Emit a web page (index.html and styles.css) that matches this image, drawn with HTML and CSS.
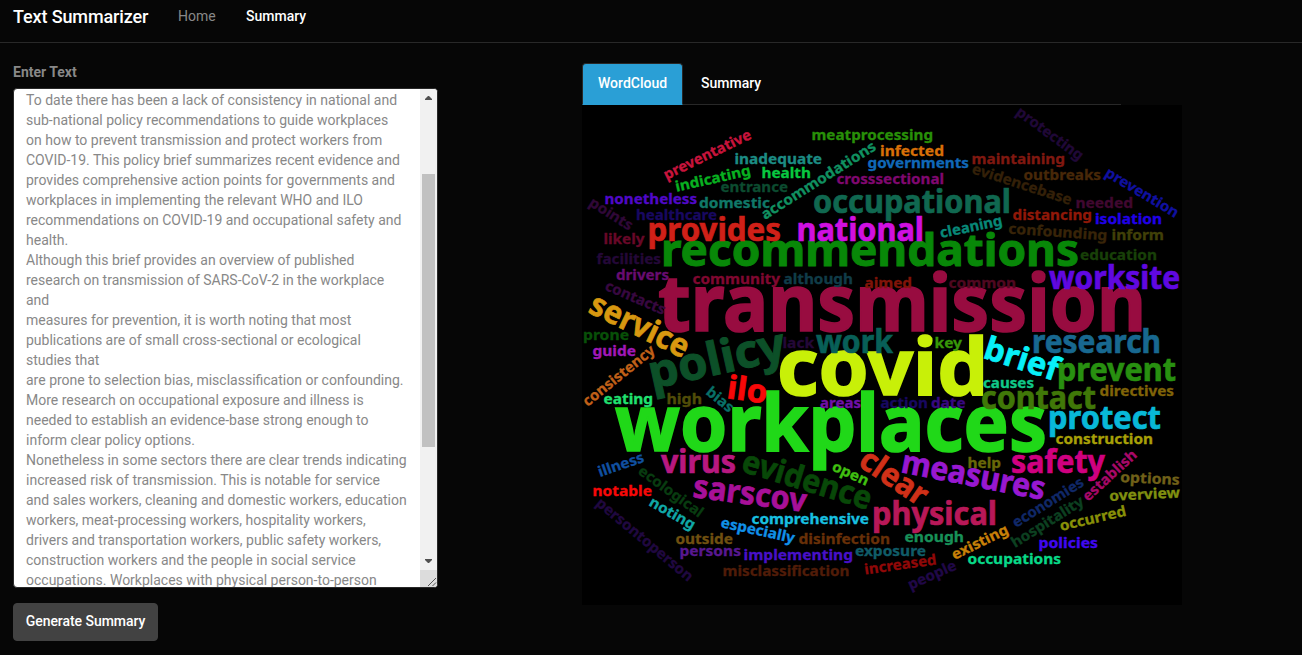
FILE: index.html
```html
<!DOCTYPE html>
<html lang="en">
<head>
<meta charset="utf-8">
<title>Text Summarizer</title>
<link rel="stylesheet" href="styles.css">
</head>
<body>
<nav class="navbar">
  <a class="brand">Text Summarizer</a>
  <a class="nav-link">Home</a>
  <a class="nav-link active">Summary</a>
</nav>
<main class="content">
  <section class="input-col">
    <label class="label">Enter Text</label>
    <div class="textarea">
      <div class="text">To date there has been a lack of consistency in national and<br>sub-national policy recommendations to guide workplaces<br>on how to prevent transmission and protect workers from<br>COVID-19. This policy brief summarizes recent evidence and<br>provides comprehensive action points for governments and<br>workplaces in implementing the relevant WHO and ILO<br>recommendations on COVID-19 and occupational safety and<br>health.<br>Although this brief provides an overview of published<br>research on transmission of SARS-CoV-2 in the workplace<br>and<br>measures for prevention, it is worth noting that most<br>publications are of small cross-sectional or ecological<br>studies that<br>are prone to selection bias, misclassification or confounding.<br>More research on occupational exposure and illness is<br>needed to establish an evidence-base strong enough to<br>inform clear policy options.<br>Nonetheless in some sectors there are clear trends indicating<br>increased risk of transmission. This is notable for service<br>and sales workers, cleaning and domestic workers, education<br>workers, meat-processing workers, hospitality workers,<br>drivers and transportation workers, public safety workers,<br>construction workers and the people in social service<br>occupations. Workplaces with physical person-to-person</div>
      <div class="scrollbar">
        <svg class="arrow" viewBox="0 0 17 17"><path d="M5 11h7v-1l-3-3h-1l-3 3z"/></svg>
        <div class="track"><div class="thumb"></div></div>
        <svg class="arrow" viewBox="0 0 17 17"><path d="M5 6h7v1l-3 3h-1l-3-3z"/></svg>
        <svg class="grip" viewBox="0 0 17 17"><path d="M8 16l8-8M12.500 16l3.500-3.500"/></svg>
      </div>
    </div>
    <button class="btn">Generate Summary</button>
  </section>
  <section class="output-col">
    <div class="tabs">
      <a class="tab selected">WordCloud</a>
      <a class="tab">Summary</a>
    </div>
    <svg class="cloud" id="cloud" viewBox="582 105 600 500"></svg>
  </section>
</main>
<script src="cloud.js"></script>
</body>
</html>
```
FILE: styles.css
```css
* { box-sizing: border-box; }
body {
  margin: 0;
  height: 655px;
  overflow: hidden;
  background: #060606;
  color: #888;
  font: 14px/20px Roboto, sans-serif;
}
.navbar {
  display: flex;
  height: 43px;
  padding: 6px 13px 0;
  border-bottom: 1px solid #282828;
}
.brand { width: 165px; color: #fff; font-size: 18px; line-height: 22px; font-weight: 500; letter-spacing: -0.12px; }
.nav-link { width: 68px; }
.nav-link.active { color: #fff; font-weight: 500; }
.content { display: flex; gap: 145px; padding: 19px 13px 0; }
.input-col { width: 424px; flex: none; }
.label { display: block; height: 26px; font-weight: 700; }
.textarea {
  display: flex;
  justify-content: space-between;
  width: 425px;
  height: 500px;
  overflow: hidden;
  border: 1px solid #282828;
  border-radius: 4px;
  background: #fff;
}
.text { padding: 1px 0 0 12px; white-space: nowrap; }
.scrollbar { display: flex; flex-direction: column; width: 17px; background: #f1f1f1; }
.arrow { width: 17px; height: 17px; flex: none; fill: #505050; }
.track { flex: 1; padding: 68px 2px 0; }
.thumb { height: 273px; background: #c1c1c1; }
.grip { width: 17px; height: 17px; flex: none; background: #dcdcdc; fill: none; stroke: #555; }
.btn {
  width: 145px;
  height: 38px;
  margin-top: 15px;
  padding: 0 0 2px;
  border: 1px solid #424242;
  border-radius: 4px;
  background: #424242;
  color: #fff;
  font: 500 14px/20px Roboto, sans-serif;
  letter-spacing: -0.05px;
}
.output-col { width: 600px; flex: none; padding-top: 1px; }
.tabs { display: flex; gap: 2px; width: 539px; height: 42px; border-bottom: 1px solid #282828; }
.tab { height: 42px; padding: 10px 16px; color: #fff; font-weight: 500; }
.tab.selected {
  width: 101px;
  padding: 9px 15px;
  border: 1px solid #282828;
  border-bottom-color: #2a9fd6;
  border-radius: 4px 4px 0 0;
  background: #2a9fd6;
}
.cloud {
  display: block;
  width: 600px;
  height: 500px;
  background: #000;
  font-family: "Noto Sans", "Open Sans", sans-serif;
  font-weight: 700;
}
.cloud text { stroke-width: 0.022em; }
```
FILE: cloud.js
```js
// word, baseline start x/y, baseline end x/y, font size, colour
const words = [
  ["transmission", 658, 331, 1146, 331, 78, "#980c40"],
  ["covid", 777, 395, 988, 395, 78, "#c8f008"],
  ["workplaces", 615, 451, 1047, 451, 78, "#20d818"],
  ["recommendations", 661, 265.5, 1079, 265.5, 45, "#088808"],
  ["policy", 652, 389, 788, 359, 46, "#0c5028"],
  ["occupational", 813, 212.5, 1011, 212.5, 32, "#106850"],
  ["national", 796.5, 241, 924, 241, 32, "#d010e0"],
  ["provides", 647.5, 241, 781, 241, 32, "#d02018"],
  ["worksite", 1049, 289, 1180, 289, 32, "#6008e0"],
  ["service", 587, 312, 683, 358.5, 32, "#d89810"],
  ["ilo", 726, 398, 766, 403.5, 32, "#f80808"],
  ["work", 816, 353, 893, 353, 32, "#086058"],
  ["brief", 982, 357.5, 1055, 381, 32, "#08f0f8"],
  ["research", 1032, 353, 1161, 353, 32, "#186890"],
  ["prevent", 1057, 381, 1176, 381, 32, "#289010"],
  ["contact", 981, 409, 1096, 409, 32, "#407808"],
  ["protect", 1048, 429, 1161, 429, 32, "#08b8d8"],
  ["virus", 661, 473, 736, 473, 32, "#b81880"],
  ["evidence", 740, 471, 868, 510, 32, "#084808"],
  ["sarscov", 692, 497, 805, 512, 32, "#a81098"],
  ["clear", 857, 465, 919, 507, 32, "#d03018"],
  ["measures", 900, 472, 1043, 500, 32, "#9818d0"],
  ["safety", 1011, 473, 1105, 473, 32, "#d00080"],
  ["physical", 872, 525, 997, 525, 32, "#b81858"],
  ["preventative", 666.5, 180, 752.5, 138, 14.5, "#c8143c"],
  ["inadequate", 734.5, 164, 822, 164, 14.5, "#1c8c84"],
  ["indicating", 676.5, 191.7, 751.5, 175, 14.5, "#08b020"],
  ["health", 761.5, 177.7, 811, 177.7, 14.5, "#08c840"],
  ["entrance", 720.5, 192, 788, 192, 14.5, "#0c4c30"],
  ["nonetheless", 604.5, 203.7, 697, 203.7, 14.5, "#5008c8"],
  ["domestic", 699, 207.7, 770, 207.7, 14.5, "#107868"],
  ["healthcare", 636, 219.7, 717, 219.7, 14.5, "#180860"],
  ["points", 588, 205, 629, 231, 14.5, "#300838"],
  ["accommodations", 765, 220, 877, 149, 14.5, "#109060"],
  ["meatprocessing", 811.5, 140, 933, 140, 14.5, "#289008"],
  ["infected", 880, 155.7, 944, 155.7, 14.5, "#d87008"],
  ["governments", 867.5, 167.7, 969, 167.7, 14.5, "#1068b8"],
  ["crosssectional", 836.5, 183.7, 944, 183.7, 14.5, "#800870"],
  ["cleaning", 941, 238, 1003, 225, 14.5, "#088878"],
  ["maintaining", 971.5, 164, 1065, 164, 14.5, "#801810"],
  ["evidencebase", 971, 173, 1070, 205, 14.5, "#342008"],
  ["outbreaks", 1023.5, 180, 1101, 180, 14.5, "#482808"],
  ["protecting", 1015, 114, 1079, 161, 14.5, "#200838"],
  ["prevention", 1104, 175.5, 1175, 218, 14.5, "#1010a0"],
  ["needed", 1075.5, 208, 1133, 208, 14.5, "#400830"],
  ["distancing", 1012.5, 220, 1092, 220, 14.5, "#901808"],
  ["isolation", 1095, 224, 1162, 224, 14.5, "#2000e8"],
  ["confounding", 1008, 233.5, 1107, 240.5, 14.5, "#382408"],
  ["inform", 1111.5, 240, 1164, 240, 14.5, "#404008"],
  ["education", 1080, 260, 1157, 260, 14.5, "#184008"],
  ["likely", 603.5, 244, 644.5, 244, 14.5, "#680828"],
  ["facilities", 596.5, 264, 661, 264, 14.5, "#240838"],
  ["drivers", 616, 280, 669, 280, 14.5, "#680c70"],
  ["contacts", 604, 289.5, 663, 315, 14.5, "#380840"],
  ["community", 692.5, 283.7, 780, 283.7, 14.5, "#800830"],
  ["although", 783.5, 284, 853, 284, 14.5, "#103c48"],
  ["aimed", 864.5, 287.7, 912, 287.7, 14.5, "#801408"],
  ["common", 948.5, 287.7, 1016, 287.7, 14.5, "#500820"],
  ["prone", 583, 340, 629, 340, 14.5, "#085008"],
  ["guide", 592.5, 356, 636, 356, 14.5, "#a018b8"],
  ["consistency", 587.5, 407, 656, 352, 14.5, "#c06018"],
  ["eating", 603.5, 404, 653, 404, 14.5, "#20e070"],
  ["high", 666.5, 404, 702, 404, 14.5, "#504c08"],
  ["bias", 705, 393.5, 729, 413, 14.5, "#087068"],
  ["lack", 782.5, 347.7, 814, 347.7, 14.5, "#240838"],
  ["key", 934.5, 347.7, 962, 347.7, 14.5, "#389808"],
  ["causes", 983, 387.7, 1034, 387.7, 14.5, "#10c888"],
  ["directives", 1099.5, 395.7, 1174, 395.7, 14.5, "#806408"],
  ["construction", 1055.5, 443.7, 1153, 443.7, 14.5, "#a8a008"],
  ["areas", 820, 407.7, 861, 407.7, 14.5, "#7010a8"],
  ["action", 880.5, 407.7, 928, 407.7, 14.5, "#180860"],
  ["date", 931, 407.7, 965.5, 407.7, 14.5, "#380880"],
  ["illness", 600, 477, 645, 461.5, 14.5, "#1050a0"],
  ["ecological", 637, 473, 699, 518, 14.5, "#083c10"],
  ["notable", 592.5, 496, 652, 496, 14.5, "#f80808"],
  ["noting", 648, 505, 692, 530, 14.5, "#10a8a8"],
  ["persontoperson", 595, 504.5, 688, 582, 14.5, "#200840"],
  ["especially", 720, 527, 793.5, 543, 14.5, "#1090e8"],
  ["outside", 675.5, 544, 733, 544, 14.5, "#705010"],
  ["persons", 679.5, 556, 741, 556, 14.5, "#581890"],
  ["comprehensive", 751.5, 524, 869, 524, 14.5, "#18c0e0"],
  ["implementing", 743.5, 560, 853, 560, 14.5, "#4810c8"],
  ["misclassification", 722.5, 576, 849.500, 576, 14.5, "#501c08"],
  ["disinfection", 798.5, 544, 890, 544, 14.5, "#683008"],
  ["exposure", 855, 556, 926, 556, 14.5, "#105c68"],
  ["enough", 904.5, 542, 964, 542, 14.5, "#189058"],
  ["open", 831, 470, 866, 486, 14.5, "#40c010"],
  ["help", 967.5, 468, 1001, 468, 14.5, "#686808"],
  ["increased", 865, 574.5, 937, 564.5, 14.5, "#900808"],
  ["people", 910.5, 590, 957.5, 569, 14.5, "#200848"],
  ["existing", 954.5, 560, 1009.5, 533, 14.5, "#c88008"],
  ["occupations", 967.5, 564, 1061, 564, 14.5, "#08d888"],
  ["economies", 1016, 528, 1085, 485, 14.5, "#102868"],
  ["establish", 1088, 502, 1138, 456, 14.5, "#a80868"],
  ["hospitality", 1015, 548, 1085, 504, 14.5, "#0c4020"],
  ["occurred", 1061, 531, 1127, 515.5, 14.5, "#889008"],
  ["options", 1120, 482, 1179.5, 485, 14.5, "#706018"],
  ["overview", 1109.5, 501, 1180, 497.5, 14.5, "#809010"],
  ["policies", 1038.5, 548, 1098, 548, 14.5, "#4008f0"]
];

const cloud = document.getElementById("cloud");
for (const [word, x1, y1, x2, y2, size, colour] of words) {
  const text = document.createElementNS("http://www.w3.org/2000/svg", "text");
  const angle = Math.atan2(y2 - y1, x2 - x1) * 180 / Math.PI;
  text.textContent = word;
  text.setAttribute("transform", `translate(${x1} ${y1}) rotate(${angle})`);
  text.setAttribute("textLength", Math.hypot(x2 - x1, y2 - y1));
  text.setAttribute("lengthAdjust", "spacingAndGlyphs");
  text.setAttribute("font-size", size);
  text.setAttribute("fill", colour);
  text.setAttribute("stroke", colour);
  cloud.appendChild(text);
}
```
